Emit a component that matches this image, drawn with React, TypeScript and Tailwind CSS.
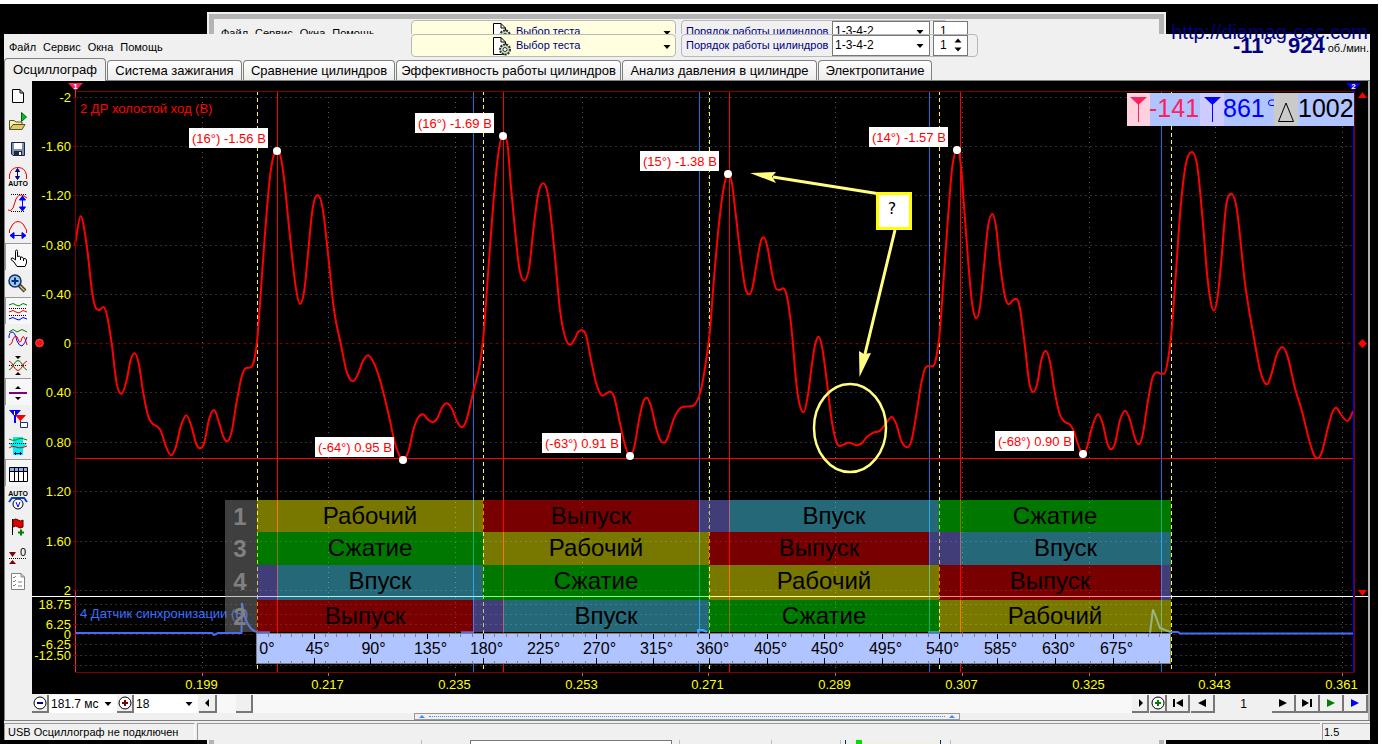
import React, { useState } from "react";

type Point = [number, number];

interface Phase {
  from: number;
  to: number;
  kind: "power" | "exhaust" | "intake" | "compression" | "overlap";
}

interface Marker {
  x: number;
  y: number;
  labelX: number;
  labelY: number;
  text: string;
}

const TABS = [
  { title: "Осциллограф", width: "w-[102px]" },
  { title: "Система зажигания", width: "w-[135px]" },
  { title: "Сравнение цилиндров", width: "w-[152px]" },
  { title: "Эффективность работы цилиндров", width: "w-[225px]" },
  { title: "Анализ давления в цилиндре", width: "w-[195px]" },
  { title: "Электропитание", width: "w-[114px]" },
];

const LEFT = 75.5;
const RIGHT = 1354.5;

const GRID_X = [202.5, 328.5, 455.5, 582.5, 708.5, 835.5, 962.5, 1089.5, 1215.5, 1342.5];
const TIMES = ["0.199", "0.217", "0.235", "0.253", "0.271", "0.289", "0.307", "0.325", "0.343", "0.361"];

const LEVELS: { y: number; text: string }[] = [
  { y: 97.5, text: "-2" },
  { y: 146.5, text: "-1.60" },
  { y: 195.5, text: "-1.20" },
  { y: 245.5, text: "-0.80" },
  { y: 294.5, text: "-0.40" },
  { y: 343.5, text: "0" },
  { y: 392.5, text: "0.40" },
  { y: 442.5, text: "0.80" },
  { y: 491.5, text: "1.20" },
  { y: 541.5, text: "1.60" },
  { y: 590.5, text: "2" },
];

const SYNC_GRID = [604.5, 614.5, 624.5, 644.5, 655.5, 665.5];
const SYNC_LEVELS = [
  { y: 604, text: "18.75" },
  { y: 624, text: "6.25" },
  { y: 634, text: "0" },
  { y: 644, text: "-6.25" },
  { y: 655, text: "-12.50" },
];

// top dead centres, 180 degrees apart
const STROKES = [257.5, 483.5, 709.5, 939.5, 1171.5];
const RED_LINES = [277.5, 503.5, 729.5, 960.5];
const BLUE_LINES = [473.5, 699.5, 929.5, 1161.5];

const MARKERS: Marker[] = [
  { x: 277, y: 151, labelX: 189, labelY: 128, text: "(16°) -1.56 В" },
  { x: 503, y: 136, labelX: 415, labelY: 113, text: "(16°) -1.69 В" },
  { x: 728, y: 174, labelX: 640, labelY: 151, text: "(15°) -1.38 В" },
  { x: 957, y: 150, labelX: 869, labelY: 127, text: "(14°) -1.57 В" },
  { x: 403, y: 460, labelX: 315, labelY: 437, text: "(-64°) 0.95 В" },
  { x: 630, y: 456, labelX: 542, labelY: 433, text: "(-63°) 0.91 В" },
  { x: 1083, y: 454, labelX: 995, labelY: 431, text: "(-68°) 0.90 В" },
];

const PHASE_STYLE = {
  power: { fill: "#ffff00", text: "Рабочий" },
  exhaust: { fill: "#ff0000", text: "Выпуск" },
  intake: { fill: "#4fdfff", text: "Впуск" },
  compression: { fill: "#00ff00", text: "Сжатие" },
  overlap: { fill: "#8882ff", text: "" },
};

const CYLINDERS: { name: string; y: number; height: number; phases: Phase[] }[] = [
  {
    name: "1",
    y: 500,
    height: 32,
    phases: [
      { from: 257, to: 483, kind: "power" },
      { from: 483, to: 699, kind: "exhaust" },
      { from: 699, to: 729, kind: "overlap" },
      { from: 729, to: 939, kind: "intake" },
      { from: 939, to: 1171, kind: "compression" },
    ],
  },
  {
    name: "3",
    y: 532,
    height: 33,
    phases: [
      { from: 257, to: 483, kind: "compression" },
      { from: 483, to: 709, kind: "power" },
      { from: 709, to: 929, kind: "exhaust" },
      { from: 929, to: 960, kind: "overlap" },
      { from: 960, to: 1171, kind: "intake" },
    ],
  },
  {
    name: "4",
    y: 565,
    height: 35,
    phases: [
      { from: 257, to: 277, kind: "overlap" },
      { from: 277, to: 483, kind: "intake" },
      { from: 483, to: 709, kind: "compression" },
      { from: 709, to: 939, kind: "power" },
      { from: 939, to: 1161, kind: "exhaust" },
      { from: 1161, to: 1171, kind: "overlap" },
    ],
  },
  {
    name: "2",
    y: 600,
    height: 32,
    phases: [
      { from: 257, to: 473, kind: "exhaust" },
      { from: 473, to: 503, kind: "overlap" },
      { from: 503, to: 709, kind: "intake" },
      { from: 709, to: 939, kind: "compression" },
      { from: 939, to: 1171, kind: "power" },
    ],
  },
];

// Samples of the vacuum sensor, three per pixel, in blocks with their own origin
const BLOCKS: { origin: number; samples: Point[] }[] = [
  {
    origin: 60,
    samples: [
      [45, 465], [62, 379], [80, 465], [97, 610], [108, 655], [118, 660], [130, 651], [140, 672], [155, 760],
      [170, 880], [184, 912], [200, 870], [212, 810], [224, 790], [236, 820], [250, 910], [265, 980], [280, 1003],
      [290, 1008], [302, 1022], [318, 1070], [333, 1096], [348, 1070], [362, 1010], [379, 976], [396, 1015],
      [408, 1060], [420, 1075], [432, 1060], [448, 985], [462, 960], [478, 1000], [490, 1040], [501, 1054],
      [515, 1025], [530, 935], [545, 860], [558, 834], [572, 832], [582, 812], [592, 745], [600, 640], [615, 430],
      [630, 260], [640, 200], [651, 183], [662, 200], [672, 265], [690, 440], [707, 590], [720, 642], [733, 600],
      [745, 480], [758, 355], [773, 315], [788, 355], [805, 500], [822, 660], [843, 765], [860, 845], [879, 874],
      [895, 850], [908, 815], [924, 796], [942, 820], [960, 870], [985, 970], [1005, 1060], [1020, 1100],
      [1029, 1108], [1045, 1085], [1060, 1020], [1075, 982], [1089, 973], [1105, 990], [1118, 996], [1132, 985],
      [1145, 955], [1160, 940], [1175, 955], [1190, 992], [1205, 1012], [1218, 995], [1240, 905],
    ],
  },
  {
    origin: 480,
    samples: [
      [0, 820], [11, 730], [25, 540], [40, 340], [55, 190], [69, 138], [82, 160], [92, 280], [105, 420], [118, 535],
      [133, 572], [148, 530], [160, 420], [175, 310], [190, 280], [205, 320], [222, 470], [240, 660], [255, 740],
      [271, 764], [285, 745], [295, 725], [305, 721], [318, 735], [333, 810], [350, 885], [367, 917], [380, 910],
      [390, 905], [402, 920], [420, 1000], [435, 1065], [449, 1098], [463, 1070], [478, 985], [490, 935],
      [500, 923], [512, 945], [530, 1020], [542, 1052], [553, 1058], [566, 1035], [580, 990], [600, 955],
      [612, 950], [635, 949], [650, 935], [665, 890], [680, 800], [690, 720], [700, 590], [715, 420], [730, 300],
      [744, 252], [755, 275], [768, 380], [782, 500], [795, 590], [808, 613], [818, 590], [830, 520], [842, 455],
      [851, 442], [862, 470], [878, 560], [890, 598], [900, 600], [908, 595], [920, 615], [935, 720], [948, 870],
      [958, 940], [971, 967], [983, 920], [995, 830], [1005, 765], [1016, 740], [1027, 775], [1040, 870],
      [1055, 990], [1068, 1052], [1080, 1068], [1092, 1063], [1107, 1058], [1130, 1065], [1145, 1060],
      [1160, 1042], [1180, 1028], [1200, 1022], [1218, 1000], [1235, 981], [1248, 1000], [1265, 1055],
      [1282, 1072], [1295, 1050], [1308, 980], [1322, 890], [1335, 835], [1345, 828], [1357, 829], [1366, 815],
      [1374, 770],
    ],
  },
  {
    origin: 920,
    samples: [
      [58, 740], [70, 580], [85, 370], [97, 230], [111, 180], [122, 220], [133, 360], [145, 520], [157, 645],
      [169, 685], [180, 650], [192, 530], [204, 410], [217, 372], [228, 410], [240, 520], [255, 620], [267, 643],
      [277, 632], [288, 626], [298, 645], [315, 770], [328, 880], [340, 906], [352, 880], [364, 810], [377, 782],
      [390, 815], [405, 910], [420, 975], [435, 996], [450, 1004], [460, 1020], [475, 1065], [488, 1092],
      [500, 1075], [515, 1015], [534, 973], [548, 1000], [562, 1060], [573, 1078], [585, 1060], [600, 990],
      [616, 962], [630, 990], [645, 1045], [656, 1063], [668, 1035], [682, 945], [697, 865], [711, 847],
      [722, 851], [733, 851], [743, 815], [755, 720], [767, 560], [782, 350], [798, 220], [816, 186], [832, 230],
      [848, 390], [862, 560], [873, 640], [882, 662], [893, 620], [905, 500], [918, 350], [934, 311], [950, 355],
      [975, 580], [1003, 750], [1020, 840], [1032, 875], [1041, 883], [1055, 850], [1070, 795], [1087, 771],
      [1103, 800], [1125, 895], [1145, 960], [1170, 1060], [1183, 1097], [1194, 1105], [1206, 1085],
      [1222, 1020], [1238, 965], [1249, 953], [1262, 972], [1282, 993], [1300, 963],
    ],
  },
];

// Cubic curve that keeps every peak flat and never overshoots
const smoothPath = (points: Point[]) => {
  const slope = points.slice(1).map((p, i) => (p[1] - points[i][1]) / (p[0] - points[i][0]));
  const tangent = points.map((_, i) => {
    const a = slope[i - 1] ?? slope[0];
    const b = slope[i] ?? slope[slope.length - 1];
    if (a * b <= 0) return 0;
    const limit = 3 * Math.min(Math.abs(a), Math.abs(b));
    return Math.sign(a) * Math.min(Math.abs(a + b) / 2, limit);
  });
  let d = `M${points[0][0]} ${points[0][1]}`;
  for (let i = 1; i < points.length; i++) {
    const [x0, y0] = points[i - 1];
    const [x1, y1] = points[i];
    const h = (x1 - x0) / 3;
    d += `C${x0 + h} ${y0 + tangent[i - 1] * h} ${x1 - h} ${y1 - tangent[i] * h} ${x1} ${y1}`;
  }
  return d;
};

const TRACE = smoothPath(
  BLOCKS.flatMap((b) => b.samples.map(([x, y]): Point => [b.origin + x / 3, 90 + y / 3]))
);

const TICKS = STROKES.slice(0, 4).flatMap((start, i) =>
  Array.from({ length: 20 }, (_, n) => ({
    x: Math.floor(start + ((STROKES[i + 1] - start) * n) / 20) + 0.5,
    angle: i * 180 + n * 9,
  }))
);

const TOOLS: { name: string; pressed?: boolean; icon: React.ReactNode }[] = [
  {
    name: "Новый",
    icon: <path d="M4.500 4.500H12L15.500 8V17.500H4.500ZM12 4.500V8H15.500" fill="#fff" stroke="#000" />,
  },
  {
    name: "Открыть",
    icon: (
      <>
        <path d="M1.500 17.500V8.500H6L8 10H14V12.500" fill="#f7f0a8" stroke="#5a5020" />
        <path d="M1.500 17.500L5 12.500H17L14 17.500Z" fill="#e3c965" stroke="#5a5020" />
        <path d="M13.500 0.500L18.500 5L13.500 9.500Z" fill="#00c020" stroke="#006010" />
      </>
    ),
  },
  {
    name: "Сохранить",
    icon: (
      <>
        <path d="M3.500 3.500H16.500V16.500H5L3.500 15Z" fill="#7d8db8" stroke="#1c2440" />
        <path d="M6 4H14V10H6Z" fill="#fff" />
        <path d="M6 12H14V16H6Z" fill="#20283c" />
        <path d="M11 13H13V16H11Z" fill="#fff" />
      </>
    ),
  },
  {
    name: "Автомасштаб",
    icon: (
      <>
        <path d="M1.500 13V9Q3 1.500 10 1.500Q17 1.500 18.500 9V13" fill="none" stroke="#f00000" />
        <path d="M9.500 3V13M7.500 5.500L9.500 2.500L11.500 5.500ZM7.500 10.500L9.500 13.500L11.500 10.500Z" fill="#000080" stroke="#000080" />
        <text x="10" y="20" fontSize="7" fontWeight="bold" textAnchor="middle">AUTO</text>
      </>
    ),
  },
  {
    name: "Масштаб по вертикали",
    icon: (
      <>
        <path d="M3 1.500H19M3 18.500H16" stroke="#000" strokeDasharray="1 1" />
        <path d="M0 17Q3 19 5 15L8 6Q11 0 16 3L19 5" fill="none" stroke="#f00000" />
        <path d="M14.500 4V17M11.500 7L14.500 3L17.500 7ZM11.500 14L14.500 18L17.500 14Z" fill="#0000ff" stroke="#0000ff" />
      </>
    ),
  },
  {
    name: "Масштаб по горизонтали",
    icon: (
      <>
        <path d="M1.500 13V10L5 4Q10 -1 15 4L18.500 10V13" fill="none" stroke="#f00000" />
        <path d="M3 15.500H17M6 12.500L2 15.500L6 18.500ZM14 12.500L18 15.500L14 18.500Z" fill="#0000ff" stroke="#0000ff" />
      </>
    ),
  },
  {
    name: "Рука",
    pressed: true,
    icon: (
      <path
        d="M7.500 13V4.500Q7.500 3 8.500 3Q9.500 3 9.500 4.500V9.500Q11.500 8.500 12.500 10Q14.500 9.500 15.500 11.500Q18 11 18.500 13V16L17 19.500H9L6 15L3 12.500Q3 10.500 5 11ZM12.500 10V13M15.500 11.500V14"
        fill="#fff"
        stroke="#000"
      />
    ),
  },
  {
    name: "Лупа",
    icon: (
      <>
        <path d="M11 11L17 17" stroke="#4a3c20" strokeWidth="4" />
        <path d="M12 12L16.500 16.500" stroke="#d8c080" strokeWidth="1.500" />
        <circle cx="7" cy="7" r="6" fill="#9ccbf5" stroke="#1a3060" strokeWidth="1.500" />
        <path d="M3.500 7H10.500M7 3.500V10.500" stroke="#003080" strokeWidth="2" />
      </>
    ),
  },
  {
    name: "Разделить сигналы",
    pressed: true,
    icon: (
      <>
        <path d="M1 4L5 2.500L8 4L11 5L15 2.500L19 4" fill="none" stroke="#008000" />
        <path d="M1 11L5 9.500L8 11L11 12L15 9.500L19 11" fill="none" stroke="#f00000" />
        <path d="M1 18L5 16.500L8 18L11 19L15 16.500L19 18" fill="none" stroke="#0000ff" />
        <path d="M1 7.500H19M1 14.500H19" stroke="#000" strokeDasharray="1 1" />
      </>
    ),
  },
  {
    name: "Совместить сигналы",
    icon: (
      <>
        <path d="M1 4L5 1.500L9 4L14 1.500L19 4" fill="none" stroke="#008000" />
        <path d="M1 10Q1 4 4 4Q7 4 9 13Q11 18 14 18Q17 16 19 9" fill="none" stroke="#0000ff" />
        <path d="M1 17Q4 17 5 11Q8 5 10 11Q12 18 14 10Q16 5 19 17" fill="none" stroke="#f00000" />
      </>
    ),
  },
  {
    name: "Наложить сигналы",
    icon: (
      <>
        <path d="M1 10.500H19" stroke="#000" strokeDasharray="1 1" />
        <path d="M1 15Q4 14 6 9Q10 2 14 9Q16 14 19 15" fill="none" stroke="#008000" />
        <path d="M1 6Q4 7 6 12Q10 19 14 12Q16 7 19 6" fill="none" stroke="#f00000" />
        <path d="M7 1H13L10 4ZM7 20H13L10 17Z" />
      </>
    ),
  },
  {
    name: "Разделитель",
    pressed: true,
    icon: (
      <>
        <path d="M7 7L10 4L13 7ZM7 15H13L10 18Z" />
        <path d="M1 11H19" stroke="#800080" strokeWidth="2" />
      </>
    ),
  },
  {
    name: "Маркеры",
    icon: (
      <>
        <path d="M1 1H13L7 8ZM6 5H8V14H6Z" fill="#0000ff" />
        <path d="M7 6H18L12.500 12ZM12 10H13V18H12Z" fill="#f00000" />
        <path d="M12.500 13.500H19.500V18.500H12.500Z" fill="#fff" stroke="#203080" />
        <path d="M6 2H7V6H6Z" fill="#fff" />
      </>
    ),
  },
  {
    name: "Диапазон",
    icon: (
      <>
        <path d="M5 1H15V7H19L15 13V19H5V13L1 7H5Z" fill="#00f0f0" />
        <path d="M1 3Q4 5 8 4Q12 1 19 4" fill="none" stroke="#008000" />
        <path d="M1 7.500H19" stroke="#000" strokeDasharray="1 1" />
        <path d="M1 12Q4 9 8 11Q12 13 19 10" fill="none" stroke="#f00000" />
        <path d="M6 17.500H14M7.500 16V19M12.500 16V19" stroke="#000080" />
      </>
    ),
  },
  {
    name: "Таблица",
    pressed: true,
    icon: (
      <>
        <path d="M1.500 4.500H19.500V18.500H1.500Z" fill="#fff" stroke="#000" />
        <path d="M2 5H19V8H2Z" fill="#8cb0f0" />
        <path d="M1.500 8.500H19.500M6.500 5V18M10.500 5V18M15.500 5V18" stroke="#000" />
      </>
    ),
  },
  {
    name: "Авторазвёртка",
    icon: (
      <>
        <text x="10" y="6" fontSize="7" fontWeight="bold" textAnchor="middle">AUTO</text>
        <path d="M1 12L4 8H16L19 12" fill="none" stroke="#0040e0" strokeWidth="2" />
        <circle cx="10" cy="14" r="5" fill="#fff" stroke="#000" />
        <path d="M8 12L10 17L12 12" fill="none" stroke="#0000ff" />
      </>
    ),
  },
  {
    name: "Добавить метку",
    icon: (
      <>
        <path d="M4.500 2V18" stroke="#000" />
        <path d="M5 3Q8 1 10 3Q13 5 15 3V10Q12 12 10 10Q8 8 5 10Z" fill="#e00000" stroke="#600000" />
        <path d="M10 15.500H16M13 12.500V18.500" stroke="#008000" strokeWidth="2" />
      </>
    ),
  },
  {
    name: "Сброс нуля",
    icon: (
      <>
        <path d="M1 14.500H19" stroke="#000" strokeDasharray="1 1" />
        <path d="M1 8H8L4.500 13ZM1 20H8L4.500 16Z" fill="#800000" />
        <text x="12" y="12" fontSize="11">0</text>
      </>
    ),
  },
  {
    name: "Отчёт",
    icon: (
      <>
        <path d="M3.500 2.500H13L16.500 6V18.500H3.500ZM13 2.500V6H16.500" fill="#fff" stroke="#808080" />
        <path d="M5 6L6 7L8 5M5 10L6 11L8 9M5 14L6 15L8 13M10 11H14M10 15H14" fill="none" stroke="#808080" />
      </>
    ),
  },
];

const DownArrow: React.FC<{ className: string }> = ({ className }) => (
  <svg viewBox="0 0 8 4" className={`pointer-events-none absolute h-1 w-2 ${className}`}>
    <path d="M0.500 0H7.500L4 4Z" />
  </svg>
);

interface ToolbarProps {
  id: string;
  menuWidth: string;
  groupWidth: string;
  spinner?: boolean;
}

const Toolbar: React.FC<ToolbarProps> = ({ id, menuWidth, groupWidth, spinner }) => {
  const [order, setOrder] = useState("1-3-4-2");
  const [cylinder, setCylinder] = useState(1);

  return (
    <div className="flex h-6 items-start text-[11px]">
      <nav className={`flex shrink-0 gap-[7px] pt-1 leading-[18px] ${menuWidth}`}>
        {["Файл", "Сервис", "Окна", "Помощь"].map((item) => (
          <button key={item} type="button">{item}</button>
        ))}
      </nav>
      <button
        type="button"
        className="relative flex h-[23px] w-[265px] shrink-0 items-center gap-1 rounded border border-[#b8b8b8] bg-[#ffffdf] pl-20 text-[#000080]"
      >
        <svg viewBox="0 0 20 20" className="h-5 w-5">
          <path d="M1.500 1.500H9L13.500 6V18.500H1.500ZM9 1.500V6H13.500" fill="#fff" stroke="#000" />
          <circle cx="13" cy="13.500" r="5" fill="#c5dcc0" stroke="#303030" strokeDasharray="2 1" strokeWidth="2" />
          <circle cx="13" cy="13.500" r="2" fill="#fff" stroke="#303030" />
        </svg>
        Выбор теста
        <DownArrow className="top-[10px] right-1" />
      </button>
      <div className={`ml-[5px] flex h-[23px] shrink-0 items-center rounded border border-[#b8b8b8] pl-1 ${groupWidth}`}>
        <label htmlFor={`${id}-order`} className="w-[146px] shrink-0 whitespace-nowrap text-[#000080]">
          Порядок работы цилиндров
        </label>
        <div className="relative shrink-0">
          <select
            id={`${id}-order`}
            value={order}
            onChange={(e) => setOrder(e.target.value)}
            className="block h-[21px] w-[98px] appearance-none border border-[#777] bg-white pb-0.5 pl-0.5 text-[12px] leading-4"
          >
            <option>1-3-4-2</option>
            <option>1-2-4-3</option>
          </select>
          <DownArrow className="top-[9px] right-1.5" />
        </div>
        <div className="relative ml-[3px] shrink-0">
          <input
            type="number"
            aria-label="Номер цилиндра"
            value={cylinder}
            onChange={(e) => setCylinder(Number(e.target.value))}
            className="block h-[21px] w-[35px] [appearance:textfield] border border-[#777] bg-white pb-0.5 pl-1.5 text-[12px] leading-4 [&::-webkit-inner-spin-button]:appearance-none"
          />
          {spinner && (
            <svg viewBox="0 0 8 14" className="pointer-events-none absolute top-[3px] right-1.5 h-3.5 w-2">
              <path d="M0.500 4.500H7.500L4 0.500ZM0.500 9.500H7.500L4 13.500Z" />
            </svg>
          )}
        </div>
      </div>
    </div>
  );
};

const Chart: React.FC = () => (
  <svg viewBox="32 81 1336 613" className="block w-full bg-black" fontSize="13" role="img" aria-label="Осциллограмма">
    <g stroke="#5c5c5c" strokeDasharray="1 4">
      {LEVELS.filter((l) => l.text !== "0").map((l) => (
        <path key={l.y} d={`M${LEFT} ${l.y}H${RIGHT}`} />
      ))}
      {SYNC_GRID.map((y) => (
        <path key={y} d={`M${LEFT} ${y}H${RIGHT}`} />
      ))}
      {GRID_X.map((x) => (
        <path key={x} d={`M${x} 97V672`} />
      ))}
    </g>
    <path d={`M${LEFT} 343.500H${RIGHT}M${LEFT} 634.500H${RIGHT}`} stroke="#800000" strokeDasharray="3 3" />

    <text x="80" y="113" fill="#ff0000">2 ДР холостой ход (В)</text>
    <text x="80" y="618" fill="#3c6eff">4 Датчик синхронизации (В)</text>

    <g stroke="#ff0000">
      {RED_LINES.map((x) => <path key={x} d={`M${x} 92V672`} />)}
    </g>
    <g stroke="#0078e0">
      {BLUE_LINES.map((x) => <path key={x} d={`M${x} 92V672`} />)}
    </g>
    <g stroke="#ffff00" strokeDasharray="4 3">
      {STROKES.map((x) => <path key={x} d={`M${x} 91V671`} />)}
    </g>

    <path d={TRACE} fill="none" stroke="#ff0000" strokeWidth="2" strokeLinejoin="round" />
    <path d={`M${LEFT} 458.500H${RIGHT}`} stroke="#ff0000" />
    <path
      d="M76 633H212L214 635L218 633H241.500L242 603Q246 631 258 632H270M461 632H474M698 633V630H703L707 632M928 632H940M1150 633L1153 609.500L1160 628L1170 632H1178L1180 633.500H1353"
      fill="none"
      stroke="#3c6eff"
      strokeWidth="2"
    />
    <path d="M32 596.500H1368" stroke="#fff" />

    {/* plot frame and ticks */}
    <path d={`M${LEFT} 91.500H${RIGHT}V672.500H${LEFT}Z`} fill="none" stroke="#800000" />
    <path d="M75.500 83V98M75.500 590V672" stroke="#ff2060" />
    <path d="M1353.500 90V672" stroke="#0000ff" />
    <g stroke="#800000">
      {[...LEVELS.map((l) => l.y), 634.5, ...SYNC_GRID].map((y) => <path key={y} d={`M73 ${y}H78`} />)}
    </g>
    <g stroke="#808080">
      {GRID_X.map((x) => <path key={x} d={`M${x} 673V676`} />)}
    </g>

    <g fill="#ffff00" textAnchor="end">
      {LEVELS.map((l) => <text key={l.text} x="71" y={l.y + 4.5}>{l.text}</text>)}
      {SYNC_LEVELS.map((l) => <text key={l.text} x="71" y={l.y + 5}>{l.text}</text>)}
    </g>
    <g fill="#ffff00" textAnchor="middle">
      {GRID_X.map((x, i) => <text key={x} x={x - 1} y="689">{TIMES[i]}</text>)}
    </g>

    {/* strokes of each cylinder */}
    <rect x="225" y="500" width="32" height="132" fill="#868686" fillOpacity="0.47" />
    <g textAnchor="middle" fontSize="24">
      {CYLINDERS.map((c) => (
        <g key={c.name}>
          <text x="240" y={c.y + 25} fill="#808080" fontWeight="bold">{c.name}</text>
          {c.phases.map((p) => (
            <g key={p.from}>
              <rect
                x={p.from}
                y={c.y}
                width={p.to - p.from}
                height={c.height}
                fill={PHASE_STYLE[p.kind].fill}
                fillOpacity="0.47"
                shapeRendering="crispEdges"
              />
              <text x={(p.from + p.to) / 2} y={c.y + 24}>{PHASE_STYLE[p.kind].text}</text>
            </g>
          ))}
        </g>
      ))}
    </g>

    {/* crank angle ruler */}
    <rect x="256.500" y="633.500" width="914" height="30" fill="#b0c4ff" stroke="#808080" />
    <g fontSize="16" textAnchor="middle">
      {TICKS.filter((t) => t.angle > 0).map((t) => (
        <path
          key={t.angle}
          d={t.angle % 45 === 0 ? `M${t.x} 634V639M${t.x} 658V664` : `M${t.x} 634V637M${t.x} 661V664`}
          stroke={t.angle % 45 === 0 ? "#000" : "#808080"}
        />
      ))}
      {TICKS.filter((t) => t.angle % 45 === 0).map((t) => (
        <text key={t.angle} x={t.angle === 0 ? 267 : t.x + 3} y="654">{t.angle}°</text>
      ))}
    </g>

    {MARKERS.map((m) => (
      <g key={m.text}>
        <rect x={m.labelX} y={m.labelY} width="79" height="20" fill="#fff" />
        <text x={m.labelX + 3} y={m.labelY + 15} fill="#ff0000">{m.text}</text>
        <circle cx={m.x} cy={m.y} r="4" fill="#fff" />
      </g>
    ))}

    {/* channel handles */}
    <circle cx="39.500" cy="343" r="4" fill="#ff1010" stroke="#ff8080" strokeWidth="0.500" />
    <path d="M68 83H83L75.500 91Z" fill="#ff2060" />
    <path d="M1346 83H1361L1353.500 91Z" fill="#0000ff" />
    <g fill="#fff" fontSize="8" fontWeight="bold" textAnchor="middle">
      <text x="75.500" y="89">1</text>
      <text x="1353.500" y="89">2</text>
    </g>
    <path d="M1358 98H1367L1362.500 92ZM1358 343.500L1362.500 339L1367 343.500L1362.500 348ZM1358 590H1367L1362.500 596Z" fill="#ff0000" />

    {/* cursor readout */}
    <rect x="1127" y="93" width="227" height="33" fill="#b0c4ff" />
    <rect x="1127" y="93" width="23" height="33" fill="#ffd1de" />
    <rect x="1200" y="93" width="24" height="33" fill="#cfcaff" />
    <rect x="1274" y="93" width="24" height="33" fill="#cacaca" />
    <path d="M1130 97H1147L1138.500 105Z" fill="#ff2060" />
    <path d="M1138.500 104V122" stroke="#ff2060" />
    <path d="M1204 97H1221L1212.500 105Z" fill="#0000ff" />
    <path d="M1212.500 104V122" stroke="#0000ff" />
    <path d="M1278.500 121.500L1286 103L1293.500 121.500Z" fill="none" stroke="#000" />
    <path d="M1274 100H1271Q1268.500 100 1268.500 103Q1268.500 105.500 1271 105.500H1274" fill="none" stroke="#0000ff" />
    <g fontSize="25">
      <text x="1149" y="117" fill="#ff2060">-141</text>
      <text x="1223" y="117" fill="#0000ff">861</text>
      <text x="1298" y="117">1002</text>
    </g>

    {/* note with two arrows */}
    <g stroke="#ffff80" strokeWidth="3" fill="none">
      <path d="M877 193.500L773 177M895 230L865 354" />
      <ellipse cx="850" cy="428" rx="36" ry="44" strokeWidth="2.500" />
    </g>
    <path d="M750 173L776 172L772 176.500L776 183ZM859.500 377L859 351L864 354L871 353Z" fill="#ffff80" />
    <rect x="877.500" y="193.500" width="33" height="35" fill="#fff" stroke="#ffff00" strokeWidth="3" />
    <text x="892" y="214" fontSize="16" textAnchor="middle" className="font-['DejaVu_Sans']">?</text>
  </svg>
);

const BarButton: React.FC<{ label: string; width: string; children: React.ReactNode }> = ({ label, width, children }) => (
  <button
    type="button"
    aria-label={label}
    className={`flex h-[18px] shrink-0 items-center justify-center border-r-2 border-b-2 border-[#777] bg-[#f0f0f0] ${width}`}
  >
    <svg viewBox="0 0 14 14" className="h-3.5 w-3.5">{children}</svg>
  </button>
);

const BarSelect: React.FC<{ label: string; value: string; width: string }> = ({ label, value, width }) => (
  <div className="relative shrink-0">
    <select
      aria-label={label}
      defaultValue={value}
      className={`block h-[18px] appearance-none bg-white pl-0.5 text-[12px] leading-4 ${width}`}
    >
      <option>{value}</option>
    </select>
    <DownArrow className="top-[7px] right-[5px]" />
  </div>
);

const ScrollBar: React.FC = () => (
  <div className="flex h-[18px] items-start bg-[#f0f0f0]">
    <BarButton label="Уменьшить" width="w-[17px]">
      <circle cx="7" cy="7" r="6" fill="#fff" stroke="#000" />
      <path d="M4 7H10" stroke="#000080" strokeWidth="2" />
    </BarButton>
    <BarSelect label="Развёртка" value="181.7 мс" width="w-[68px]" />
    <BarButton label="Увеличить" width="w-[17px]">
      <circle cx="7" cy="7" r="6" fill="#fff" stroke="#000" />
      <path d="M4 7H10M7 4V10" stroke="#800000" strokeWidth="2" />
    </BarButton>
    <BarSelect label="Шаг" value="18" width="w-[64px]" />
    <BarButton label="Прокрутить влево" width="ml-px w-[18px]">
      <path d="M9 3V11L5 7Z" />
    </BarButton>
    <div className="flex h-full grow bg-[#f8f8f8] pl-[19px]">
      <div className="h-[18px] w-[17px] border-r-2 border-b-2 border-[#777] bg-[#f0f0f0]" />
    </div>
    <BarButton label="Прокрутить вправо" width="w-[17px]">
      <path d="M6 3V11L10 7Z" />
    </BarButton>
    <BarButton label="Добавить" width="ml-px w-[17px]">
      <circle cx="7" cy="7" r="6" fill="#fff" stroke="#000" />
      <path d="M4 7H10M7 4V10" stroke="#008000" strokeWidth="2" />
    </BarButton>
    <BarButton label="В начало" width="w-[23px]">
      <path d="M2 3H4V11H2ZM12 3V11L5 7Z" />
    </BarButton>
    <BarButton label="Назад" width="ml-px w-6">
      <path d="M11 3V11L3 7Z" />
    </BarButton>
    <output className="w-[57px] text-center text-[12px] leading-[18px]">1</output>
    <BarButton label="Вперёд" width="w-6">
      <path d="M3 3V11L11 7Z" />
    </BarButton>
    <BarButton label="В конец" width="w-6">
      <path d="M2 3V11L9 7ZM10 3H12V11H10Z" />
    </BarButton>
    <BarButton label="Воспроизвести" width="w-6">
      <path d="M3 3V11L11 7Z" fill="#008000" />
    </BarButton>
    <BarButton label="Запись" width="w-6">
      <path d="M3 3V11L11 7Z" fill="#0000ff" />
    </BarButton>
  </div>
);

const BackWindow: React.FC = () => (
  <div className="absolute top-2 right-[212px] bottom-0 left-[207px] flex flex-col border-2 border-b-0 border-[#f0f0f0] bg-[#f0f0f0]">
    <div className="flex grow flex-col justify-between border-[5px] border-b-0 border-[#b4b4b4]">
      <div className="pt-px">
        <Toolbar id="back" menuWidth="w-[197px] pl-[7px]" groupWidth="w-[267px]" />
      </div>
      <div className="flex h-1">
        <div className="w-[208px] border-r border-[#bbb]" />
        <div className="ml-12 w-[202px] border border-b-0 border-[#777] bg-white" />
        <div className="w-2 border-r border-[#bbb]" />
        <div className="w-[92px] border-r border-[#bbb]" />
        <div className="w-[69px] border-r border-[#bbb]" />
        <div className="ml-1 w-24 border-x border-[#003060] bg-[#f0f0e8] pl-2.5">
          <div className="h-1 w-1.5 bg-[#00e000]" />
        </div>
        <div className="w-2.5 border-r border-[#bbb]" />
      </div>
    </div>
  </div>
);

const App: React.FC = () => {
  const [activeTab, setActiveTab] = useState(0);

  return (
    <div className="min-h-screen bg-white pt-1 pr-1 font-['Liberation_Sans',sans-serif] text-black">
      <div className="relative min-h-[calc(100vh-4px)] bg-black pt-[30px] pr-2 pb-1 pl-1">
        <BackWindow />

        <main className="relative bg-[#f0f0f0]">
          <div className="flex h-6">
            <Toolbar id="main" menuWidth="w-[407px] pl-[5px]" groupWidth="w-[297px]" spinner />
            <div className="ml-auto flex pr-px text-[22px] leading-6 font-bold text-[#000080]">
              <span className="w-[55px]">-11°</span>
              <span>924</span>
              <span className="ml-[3px] text-[11px] leading-7 font-normal text-black">об./мин.</span>
            </div>
          </div>

          <div role="tablist" className="flex h-[23px] items-end gap-px border-b border-[#808080]">
            {TABS.map((tab, i) => (
              <button
                key={tab.title}
                role="tab"
                aria-selected={i === activeTab}
                type="button"
                onClick={() => setActiveTab(i)}
                className={`shrink-0 rounded-t border border-b-0 border-[#808080] text-[13px] whitespace-nowrap ${tab.width} ${
                  i === activeTab
                    ? "-mb-px h-[23px] bg-[#f0f0f0]"
                    : "h-5 bg-gradient-to-b from-white to-[#ececec]"
                }`}
              >
                {tab.title}
              </button>
            ))}
          </div>

          <div className="flex border-r-2 border-[#b0b0b0]">
            <div className="w-7 shrink-0 border-l border-[#808080]">
              {TOOLS.map((tool) => (
                <button
                  key={tool.name}
                  type="button"
                  aria-label={tool.name}
                  className={`flex h-[27px] w-[26px] items-center ${
                    tool.pressed ? "border-t border-l border-[#999] bg-[#f7f7f7] pl-0.5" : "pl-[3px]"
                  }`}
                >
                  <svg viewBox="0 0 20 20" className="h-5 w-5 shrink-0">{tool.icon}</svg>
                </button>
              ))}
            </div>
            <div className="min-w-0 grow">
              <Chart />
              <div className="pt-px">
                <ScrollBar />
              </div>
              <div className="flex h-[7px] justify-center pr-[26px]">
                <div className="flex w-[546px] items-center justify-between border border-[#999] px-1">
                  <svg viewBox="0 0 6 3" className="h-[3px] w-1.5"><path d="M0 3L3 0L6 3Z" fill="#3090ff" /></svg>
                  <div className="mx-1 grow border-t border-dotted border-[#3090ff]" />
                  <svg viewBox="0 0 6 3" className="h-[3px] w-1.5"><path d="M0 3L3 0L6 3Z" fill="#3090ff" /></svg>
                </div>
              </div>
            </div>
          </div>

          <footer className="border-t border-[#808080] pt-0.5 text-[11px] leading-4">
            <div className="flex gap-0.5">
              <div className="w-[191px] border-t border-r border-l border-[#999] border-r-white pl-[3px]">
                USB Осциллограф не подключен
              </div>
              <div className="grow border-t border-l border-[#999]" />
              <div className="w-12 border-t border-l border-[#999] pl-px">1.5</div>
            </div>
          </footer>
        </main>

        <a
          href="http://diamag-osc.com"
          className="absolute top-4 right-2.5 text-[20px] leading-6 text-[#000080]"
        >
          http://diamag-osc.com
        </a>
      </div>
    </div>
  );
};

export default App;
